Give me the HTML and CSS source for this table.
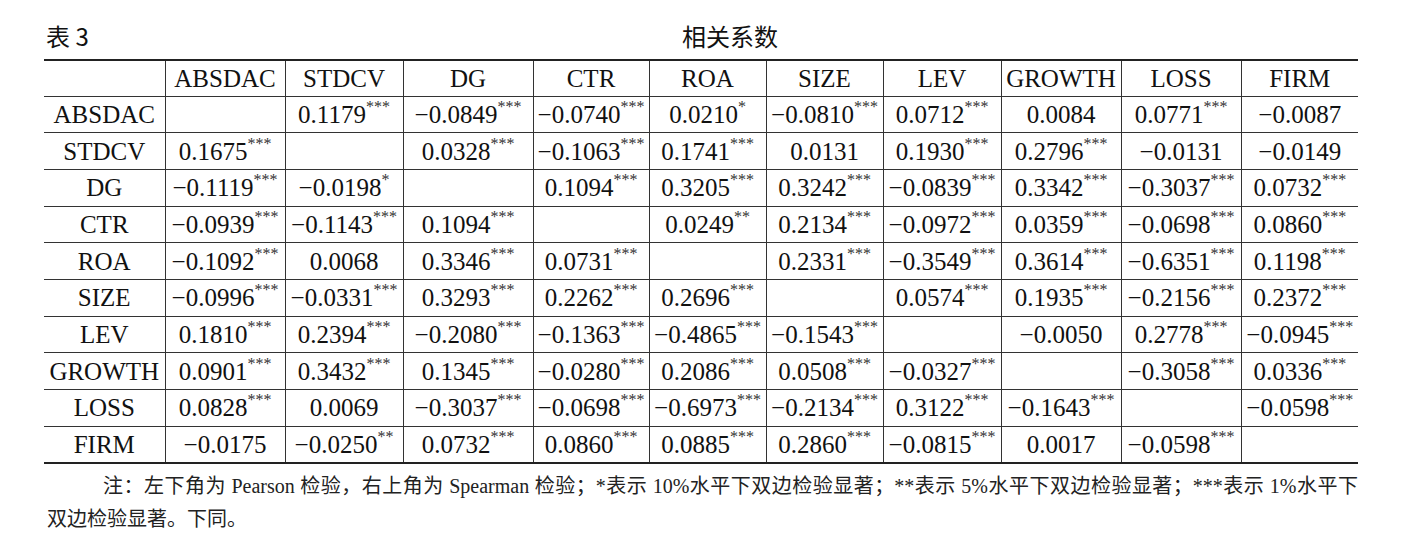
FILE: index.html
```html
<!DOCTYPE html>
<html lang="zh-CN">
<head>
<meta charset="utf-8">
<title>相关系数</title>
<link rel="stylesheet" href="styles.css">
</head>
<body>
<div class="page">
  <div class="title-row">
    <span class="tab-no">表 3</span>
    <span class="tab-name">相关系数</span>
  </div>
  <table class="corr">
    <colgroup>
      <col style="width:121px"><col style="width:120px"><col style="width:118px"><col style="width:130px"><col style="width:116px"><col style="width:117px"><col style="width:117px"><col style="width:118px"><col style="width:120px"><col style="width:120px"><col style="width:117px">
    </colgroup>
    <thead>
      <tr><th></th><th>ABSDAC</th><th>STDCV</th><th>DG</th><th>CTR</th><th>ROA</th><th>SIZE</th><th>LEV</th><th>GROWTH</th><th>LOSS</th><th>FIRM</th></tr>
    </thead>
    <tbody>
      <tr><th>ABSDAC</th><td></td><td>0.1179<sup>***</sup></td><td>−0.0849<sup>***</sup></td><td>−0.0740<sup>***</sup></td><td>0.0210<sup>*</sup></td><td>−0.0810<sup>***</sup></td><td>0.0712<sup>***</sup></td><td>0.0084</td><td>0.0771<sup>***</sup></td><td>−0.0087</td></tr>
      <tr><th>STDCV</th><td>0.1675<sup>***</sup></td><td></td><td>0.0328<sup>***</sup></td><td>−0.1063<sup>***</sup></td><td>0.1741<sup>***</sup></td><td>0.0131</td><td>0.1930<sup>***</sup></td><td>0.2796<sup>***</sup></td><td>−0.0131</td><td>−0.0149</td></tr>
      <tr><th>DG</th><td>−0.1119<sup>***</sup></td><td>−0.0198<sup>*</sup></td><td></td><td>0.1094<sup>***</sup></td><td>0.3205<sup>***</sup></td><td>0.3242<sup>***</sup></td><td>−0.0839<sup>***</sup></td><td>0.3342<sup>***</sup></td><td>−0.3037<sup>***</sup></td><td>0.0732<sup>***</sup></td></tr>
      <tr><th>CTR</th><td>−0.0939<sup>***</sup></td><td>−0.1143<sup>***</sup></td><td>0.1094<sup>***</sup></td><td></td><td>0.0249<sup>**</sup></td><td>0.2134<sup>***</sup></td><td>−0.0972<sup>***</sup></td><td>0.0359<sup>***</sup></td><td>−0.0698<sup>***</sup></td><td>0.0860<sup>***</sup></td></tr>
      <tr><th>ROA</th><td>−0.1092<sup>***</sup></td><td>0.0068</td><td>0.3346<sup>***</sup></td><td>0.0731<sup>***</sup></td><td></td><td>0.2331<sup>***</sup></td><td>−0.3549<sup>***</sup></td><td>0.3614<sup>***</sup></td><td>−0.6351<sup>***</sup></td><td>0.1198<sup>***</sup></td></tr>
      <tr><th>SIZE</th><td>−0.0996<sup>***</sup></td><td>−0.0331<sup>***</sup></td><td>0.3293<sup>***</sup></td><td>0.2262<sup>***</sup></td><td>0.2696<sup>***</sup></td><td></td><td>0.0574<sup>***</sup></td><td>0.1935<sup>***</sup></td><td>−0.2156<sup>***</sup></td><td>0.2372<sup>***</sup></td></tr>
      <tr><th>LEV</th><td>0.1810<sup>***</sup></td><td>0.2394<sup>***</sup></td><td>−0.2080<sup>***</sup></td><td>−0.1363<sup>***</sup></td><td>−0.4865<sup>***</sup></td><td>−0.1543<sup>***</sup></td><td></td><td>−0.0050</td><td>0.2778<sup>***</sup></td><td>−0.0945<sup>***</sup></td></tr>
      <tr><th>GROWTH</th><td>0.0901<sup>***</sup></td><td>0.3432<sup>***</sup></td><td>0.1345<sup>***</sup></td><td>−0.0280<sup>***</sup></td><td>0.2086<sup>***</sup></td><td>0.0508<sup>***</sup></td><td>−0.0327<sup>***</sup></td><td></td><td>−0.3058<sup>***</sup></td><td>0.0336<sup>***</sup></td></tr>
      <tr><th>LOSS</th><td>0.0828<sup>***</sup></td><td>0.0069</td><td>−0.3037<sup>***</sup></td><td>−0.0698<sup>***</sup></td><td>−0.6973<sup>***</sup></td><td>−0.2134<sup>***</sup></td><td>0.3122<sup>***</sup></td><td>−0.1643<sup>***</sup></td><td></td><td>−0.0598<sup>***</sup></td></tr>
      <tr><th>FIRM</th><td>−0.0175</td><td>−0.0250<sup>**</sup></td><td>0.0732<sup>***</sup></td><td>0.0860<sup>***</sup></td><td>0.0885<sup>***</sup></td><td>0.2860<sup>***</sup></td><td>−0.0815<sup>***</sup></td><td>0.0017</td><td>−0.0598<sup>***</sup></td><td></td></tr>
    </tbody>
  </table>
  <div class="note">
    <div class="note-line first">注：左下角为 Pearson 检验，右上角为 Spearman 检验；*表示 10%水平下双边检验显著；**表示 5%水平下双边检验显著；***表示 1%水平下</div>
    <div class="note-line">双边检验显著。下同。</div>
  </div>
</div>
</body>
</html>
```

FILE: styles.css
```css
html, body {
  margin: 0;
  padding: 0;
  background: #ffffff;
}

.page {
  padding: 19px 0 0 44px;
  width: 1314px;
  color: #111;
}

.title-row {
  display: flex;
  height: 34px;
  line-height: 34px;
  margin-bottom: 6px;
  font-family: "Noto Sans CJK SC", sans-serif;
  font-size: 24px;
  font-weight: 400;
  color: #111;
}

.tab-no {
  width: 638px;
  padding-left: 2px;
  box-sizing: border-box;
}

.corr {
  border-collapse: collapse;
  table-layout: fixed;
  width: 1314px;
  font-family: "Liberation Serif", "Times New Roman", serif;
  font-size: 25px;
  color: #111;
  border-top: 2px solid #222;
  border-bottom: 2px solid #222;
}

.corr th,
.corr td {
  padding: 0;
  text-align: center;
  font-weight: normal;
  white-space: nowrap;
  border-bottom: 1px solid #333;
  border-left: 1px solid #333;
  line-height: 1;
}

.corr th:first-child {
  border-left: none;
}

.corr thead tr {
  height: 36px;
}

.corr tbody tr {
  height: 36.7px;
}

.corr sup {
  font-size: 16px;
  line-height: 0;
  vertical-align: 11px;
  color: #333;
}

.note {
  margin-top: 6px;
  font-family: "Liberation Serif", "Noto Sans CJK SC", serif;
  font-size: 20px;
  line-height: 33px;
  color: #222;
  padding-left: 3px;
}

.note-line.first {
  text-indent: 56px;
  text-align: justify;
  text-align-last: justify;
}
```
